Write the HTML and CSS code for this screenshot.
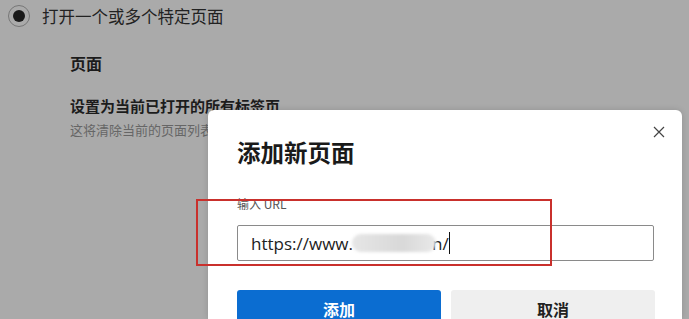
FILE: index.html
```html
<!DOCTYPE html>
<html lang="zh-CN">
  <head>
    <meta charset="UTF-8" />
    <meta name="viewport" content="width=device-width, initial-scale=1.0" />
    <title>添加新页面</title>
    <link rel="stylesheet" href="styles.css">
  </head>
  <body>
    <div class="settings">
      <label class="radio-row">
        <span class="radio"><span class="dot"></span></span>
        打开一个或多个特定页面
      </label>
      <div class="section">
        <h3 class="section-title">页面</h3>
        <div class="item">
          <div class="item-title">设置为当前已打开的所有标签页</div>
          <div class="item-desc">这将清除当前的页面列表</div>
        </div>
      </div>
    </div>

    <div class="dialog">
      <button class="close" aria-label="关闭">
        <svg width="12" height="12" viewBox="0 0 12 12">
          <path d="M1 1 L11 11 M11 1 L1 11" stroke="#444" stroke-width="1.2" fill="none" />
        </svg>
      </button>
      <h2 class="dialog-title">添加新页面</h2>
      <div class="field-label">输入 URL</div>
      <div class="input">
        https://www.<span class="blur"></span><span class="tail">n/</span><span class="caret"></span>
      </div>
      <div class="buttons">
        <button class="btn btn-primary">添加</button>
        <button class="btn">取消</button>
      </div>
    </div>

    <div class="highlight"></div>
  </body>
</html>
```

FILE: styles.css
```css
html {
  overflow: hidden;
}
body {
  margin: 0;
  height: 319px;
  overflow: hidden;
  position: relative;
  background-color: #aaaaaa;
  font-family: "Noto Sans CJK SC", "Noto Sans", sans-serif;
  color: #1c1c1c;
}
.radio-row {
  display: flex;
  align-items: center;
  height: 32px;
  padding-left: 8px;
  font-size: 16.5px;
  color: #222;
}
.radio {
  width: 20px;
  height: 20px;
  border: 1px solid #777;
  border-radius: 50%;
  display: flex;
  align-items: center;
  justify-content: center;
  margin-right: 12px;
}
.dot {
  width: 12px;
  height: 12px;
  border-radius: 50%;
  background-color: #1a1a1a;
}
.section {
  padding-left: 70px;
}
.section-title {
  margin: 18px 0 0;
  font-size: 16px;
  line-height: 26px;
  font-weight: bold;
}
.item {
  margin-top: 19px;
}
.item-title {
  font-size: 15px;
  line-height: 22px;
  font-weight: bold;
}
.item-desc {
  font-size: 13px;
  line-height: 20px;
  color: #666;
  margin-top: 3px;
}
.dialog {
  position: absolute;
  left: 208px;
  top: 110px;
  width: 445px;
  height: 209px;
  padding: 0 0 0 29px;
  background-color: #fff;
  border-radius: 6px 6px 0 0;
  box-shadow: 0 0 6px rgba(0, 0, 0, 0.15);
  overflow: hidden;
}
.close {
  position: absolute;
  right: 17px;
  top: 16px;
  padding: 0;
  border: none;
  background: none;
  width: 12px;
  height: 12px;
}
.dialog-title {
  margin: 26px 0 0;
  font-size: 23.5px;
  line-height: 32px;
  font-weight: bold;
  color: #1a1a1a;
}
.field-label {
  margin-top: 28px;
  font-size: 12px;
  line-height: 16px;
  color: #555;
}
.input {
  margin-top: 13px;
  width: 402px;
  height: 34px;
  padding-left: 13px;
  border: 1px solid #8a8a8a;
  border-radius: 2px;
  display: flex;
  align-items: center;
  font-family: "Open Sans", "Noto Sans", sans-serif;
  font-size: 17px;
  color: #222;
}
.blur {
  display: inline-block;
  width: 84px;
  height: 18px;
  margin-left: -1px;
  background: linear-gradient(90deg, #e6e6e6, #d8d8d8 60%, #e9e9e9);
  border-radius: 9px;
  filter: blur(1.5px);
}
.tail {
  margin-left: -4px;
}
.caret {
  display: inline-block;
  width: 1px;
  height: 22px;
  background-color: #111;
}
.buttons {
  display: flex;
  gap: 10px;
  margin-top: 29px;
}
.btn {
  width: 204px;
  height: 34px;
  border: none;
  border-radius: 3px;
  background-color: #efefef;
  font-family: "Noto Sans CJK SC", sans-serif;
  font-size: 16px;
  font-weight: bold;
  color: #222;
  padding: 4px 0 0;
}
.btn-primary {
  background-color: #0b6dd1;
  color: #fff;
}
.highlight {
  position: absolute;
  left: 196px;
  top: 199px;
  width: 352px;
  height: 63px;
  border: 2px solid #c9302c;
}
```
